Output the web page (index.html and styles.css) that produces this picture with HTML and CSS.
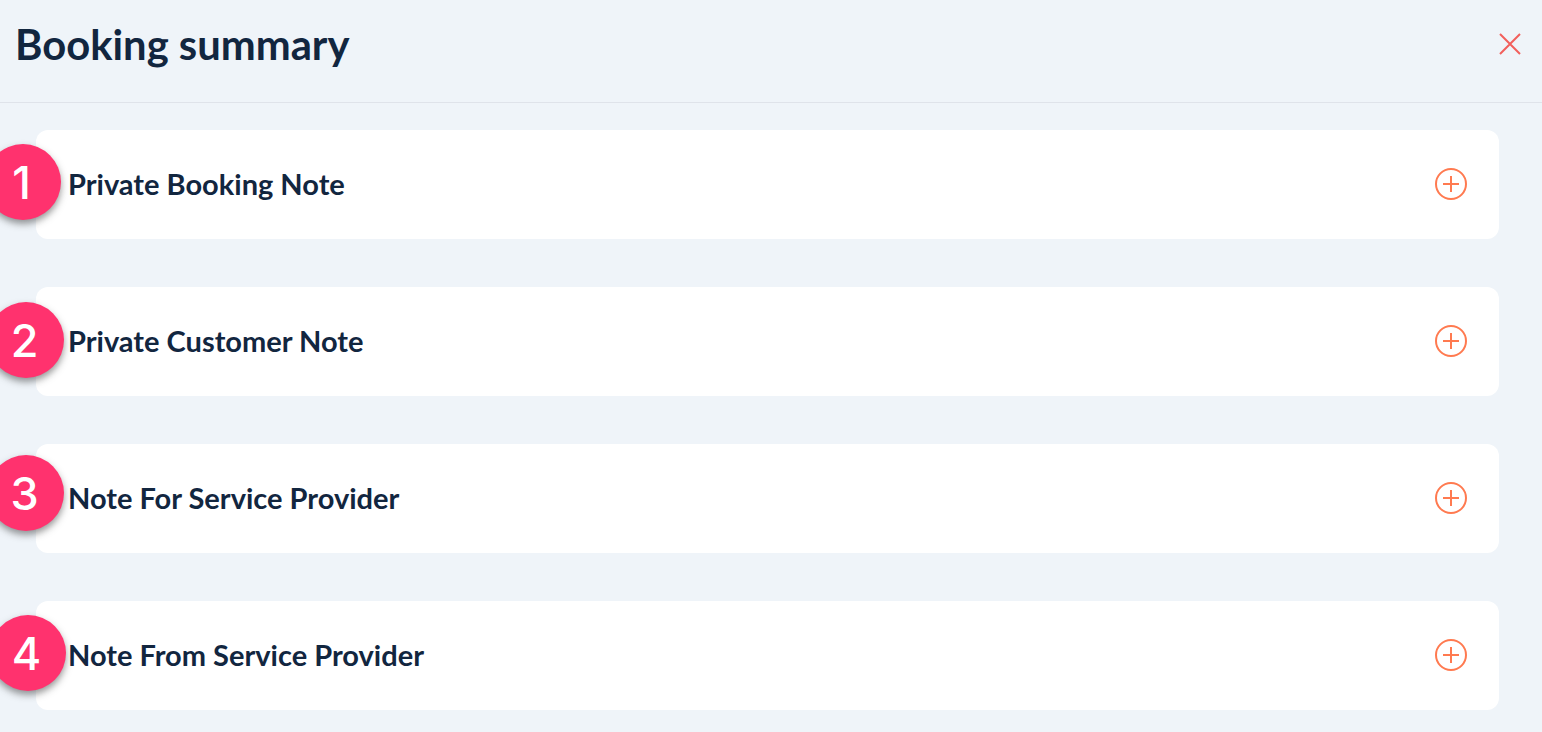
FILE: index.html
```html
<!DOCTYPE html>
<html lang="en">

<head>
    <meta charset="UTF-8">
    <title>Booking summary</title>
    <link rel="stylesheet" href="styles.css">
</head>

<body>
    <header class="header">
        <h1 class="title">Booking summary</h1>
        <a class="close" href="#" aria-label="Close">
            <svg width="24" height="24" viewBox="0 0 24 24">
                <path d="M2 2 L22 22 M22 2 L2 22" />
            </svg>
        </a>
    </header>
    <main class="notes">
        <section class="note">
            <span class="badge badge-1">1</span>
            <h2 class="note-title">Private Booking Note</h2>
            <svg class="plus" width="32" height="32" viewBox="0 0 32 32">
                <circle cx="16" cy="16" r="15" />
                <path d="M8 16 H24 M16 8 V24" />
            </svg>
        </section>
        <section class="note">
            <span class="badge badge-2">2</span>
            <h2 class="note-title">Private Customer Note</h2>
            <svg class="plus" width="32" height="32" viewBox="0 0 32 32">
                <circle cx="16" cy="16" r="15" />
                <path d="M8 16 H24 M16 8 V24" />
            </svg>
        </section>
        <section class="note">
            <span class="badge badge-3">3</span>
            <h2 class="note-title">Note For Service Provider</h2>
            <svg class="plus" width="32" height="32" viewBox="0 0 32 32">
                <circle cx="16" cy="16" r="15" />
                <path d="M8 16 H24 M16 8 V24" />
            </svg>
        </section>
        <section class="note">
            <span class="badge badge-4">4</span>
            <h2 class="note-title">Note From Service Provider</h2>
            <svg class="plus" width="32" height="32" viewBox="0 0 32 32">
                <circle cx="16" cy="16" r="15" />
                <path d="M8 16 H24 M16 8 V24" />
            </svg>
        </section>
    </main>
</body>

</html>
```

FILE: styles.css
```css
* {
    padding: 0;
    margin: 0;
    box-sizing: border-box;
}

html,
body {
    height: 100%;
    overflow: hidden;
}

body {
    background-color: #eff4f9;
    font-family: Lato, "Liberation Sans", sans-serif;
    color: #12263f;
}

.header {
    height: 103px;
    padding: 0 20px 0 15px;
    border-bottom: 1px solid #dfe3ea;
    display: flex;
    align-items: center;
    justify-content: space-between;
}

.title {
    font-size: 41.75px;
    font-weight: 700;
    line-height: 1;
    margin-top: -12px;
}

.close {
    display: flex;
    margin-top: -15px;
}

.close path {
    fill: none;
    stroke: #f25f5c;
    stroke-width: 2;
}

.notes {
    padding: 27px 43px 0 36px;
    display: flex;
    flex-direction: column;
    gap: 48px;
}

.note {
    height: 109px;
    padding: 0 32px;
    background-color: #fff;
    border-radius: 12px;
    display: flex;
    align-items: center;
    justify-content: space-between;
    position: relative;
}

.note-title {
    font-size: 29px;
    font-weight: 700;
    line-height: 1;
    margin-top: -2px;
}

.plus {
    margin-top: -1px;
}

.plus circle,
.plus path {
    fill: none;
    stroke: #ff7a50;
    stroke-width: 2;
}

/* numbered callouts sit over the card edge */
.badge {
    position: absolute;
    width: 76px;
    height: 76px;
    padding-right: 3px;
    border-radius: 50%;
    background-color: #ff326e;
    color: #fff;
    font-family: Inter, Roboto, sans-serif;
    font-size: 45px;
    font-weight: 500;
    display: flex;
    align-items: center;
    justify-content: center;
    box-shadow: 0 4px 7px rgba(50, 50, 50, 0.5);
}

.badge-1 {
    left: -51px;
    top: 14px;
}

.badge-2 {
    left: -48px;
    top: 15px;
}

.badge-3 {
    left: -48px;
    top: 11px;
}

.badge-4 {
    left: -46px;
    top: 14px;
}
```
